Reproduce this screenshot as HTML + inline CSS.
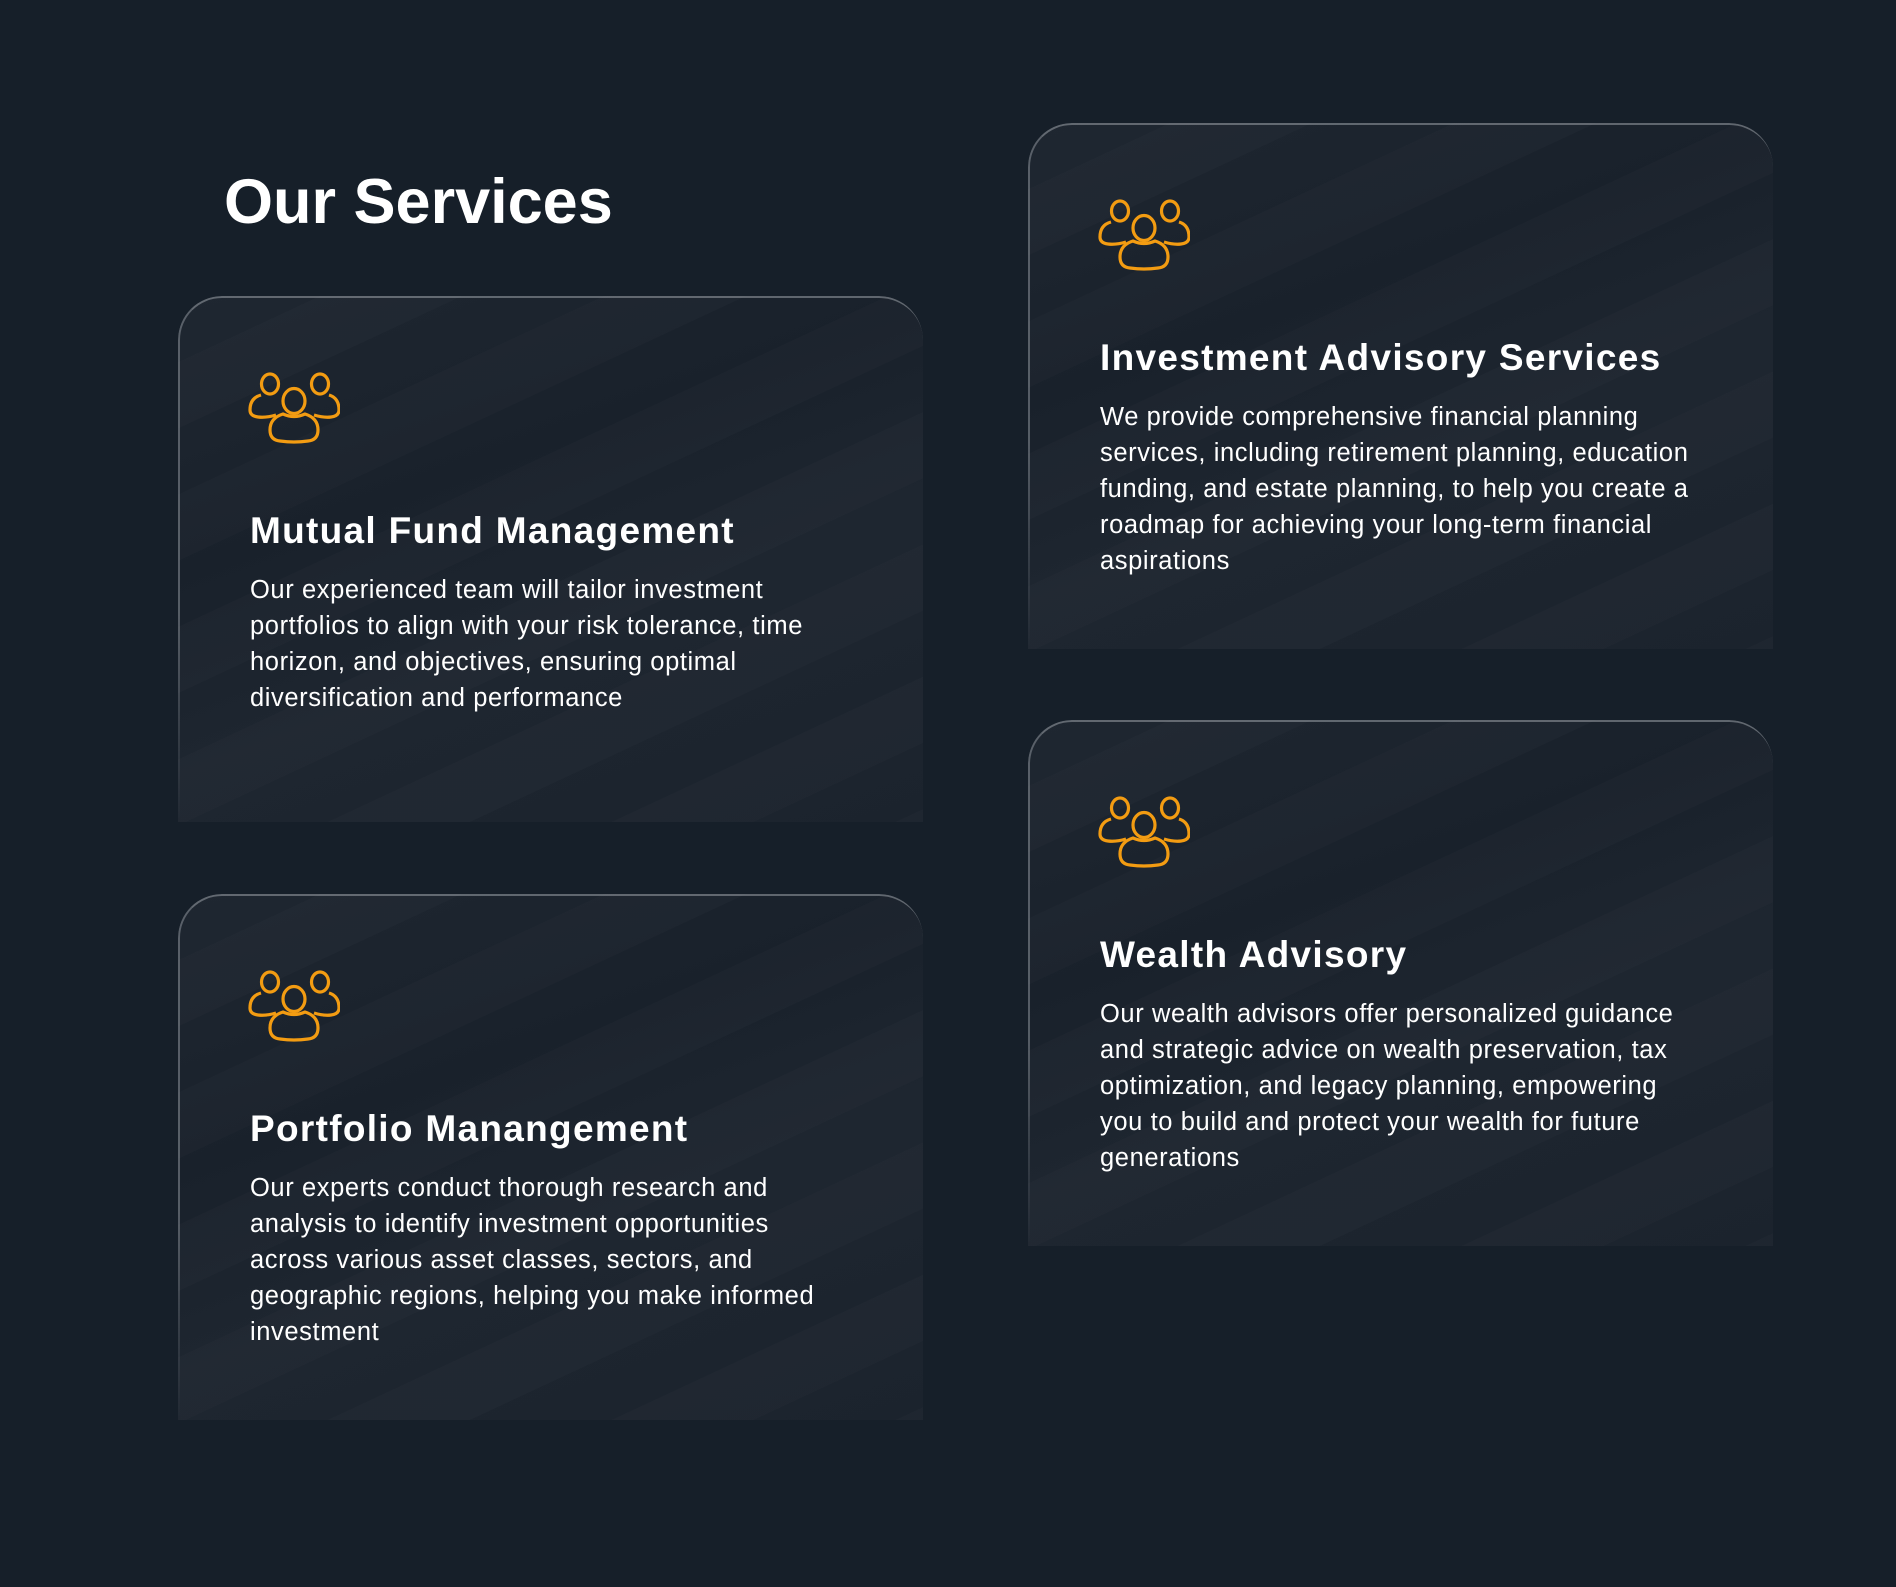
<!DOCTYPE html>
<html><head><meta charset="utf-8"><style>
html,body{margin:0;padding:0;}
body{width:1896px;height:1587px;background:#161f29;position:relative;overflow:hidden;font-family:"Liberation Sans",sans-serif;color:#fff;}
h1{position:absolute;left:224px;top:162px;margin:0;font-size:63px;font-weight:700;letter-spacing:0px;line-height:80px;}
.card{position:absolute;width:745px;height:526px;border-radius:44px 44px 0 0;
background:
repeating-linear-gradient(155deg,rgba(255,255,255,0.0) 0 60px,rgba(255,255,255,0.015) 60px 120px),
linear-gradient(160deg,#1f2731 0%,#19212b 35%,#1e2630 60%,#1b232d 100%);
box-sizing:border-box;}
.card:before{content:"";position:absolute;inset:0;border-radius:44px 44px 0 0;border-top:2px solid rgba(200,205,210,0.4);border-left:2px solid rgba(200,205,210,0.35);
-webkit-mask:linear-gradient(180deg,#000 0%,#000 60%,transparent 100%);}
.icon{position:absolute;left:70px;top:74px;width:92px;height:76px;}
.card h2{position:absolute;left:72px;top:213px;margin:0;font-size:37px;font-weight:700;line-height:44px;white-space:nowrap;letter-spacing:1.3px;}
.card p{position:absolute;left:72px;top:276px;margin:0;font-size:25.5px;line-height:36px;width:600px;letter-spacing:0.6px;}
</style></head><body>
<h1>Our Services</h1>

<div class="card" style="left:178px;top:296px">
<svg class="icon" viewBox="0 0 92 76" fill="none" stroke="#f39c12" stroke-width="3.2" stroke-linejoin="round">
<ellipse cx="22" cy="14" rx="8.5" ry="10"/><ellipse cx="72" cy="14" rx="8.5" ry="10"/>
<path d="M13 25 Q2 28 2 40 Q2 46 10 47 Q18 48 28 45"/>
<path d="M81 25 Q91 28 91 40 Q91 46 83 47 Q76 48 66 45"/>
<ellipse cx="46" cy="31" rx="11" ry="12.5"/>
<path d="M35 44 Q22 48 22 60 Q22 70 32 71 Q46 73 60 71 Q70 70 70 60 Q70 48 57 44 Q46 49 35 44Z"/>
</svg>
<h2>Mutual Fund Management</h2>
<p>Our experienced team will tailor investment portfolios to align with your risk tolerance, time horizon, and objectives, ensuring optimal diversification and performance</p>
</div>

<div class="card" style="left:178px;top:894px">
<svg class="icon" viewBox="0 0 92 76" fill="none" stroke="#f39c12" stroke-width="3.2" stroke-linejoin="round">
<ellipse cx="22" cy="14" rx="8.5" ry="10"/><ellipse cx="72" cy="14" rx="8.5" ry="10"/>
<path d="M13 25 Q2 28 2 40 Q2 46 10 47 Q18 48 28 45"/>
<path d="M81 25 Q91 28 91 40 Q91 46 83 47 Q76 48 66 45"/>
<ellipse cx="46" cy="31" rx="11" ry="12.5"/>
<path d="M35 44 Q22 48 22 60 Q22 70 32 71 Q46 73 60 71 Q70 70 70 60 Q70 48 57 44 Q46 49 35 44Z"/>
</svg>
<h2>Portfolio Manangement</h2>
<p>Our experts conduct thorough research and analysis to identify investment opportunities across various asset classes, sectors, and geographic regions, helping you make informed investment</p>
</div>

<div class="card" style="left:1028px;top:123px">
<svg class="icon" viewBox="0 0 92 76" fill="none" stroke="#f39c12" stroke-width="3.2" stroke-linejoin="round">
<ellipse cx="22" cy="14" rx="8.5" ry="10"/><ellipse cx="72" cy="14" rx="8.5" ry="10"/>
<path d="M13 25 Q2 28 2 40 Q2 46 10 47 Q18 48 28 45"/>
<path d="M81 25 Q91 28 91 40 Q91 46 83 47 Q76 48 66 45"/>
<ellipse cx="46" cy="31" rx="11" ry="12.5"/>
<path d="M35 44 Q22 48 22 60 Q22 70 32 71 Q46 73 60 71 Q70 70 70 60 Q70 48 57 44 Q46 49 35 44Z"/>
</svg>
<h2>Investment Advisory Services</h2>
<p>We provide comprehensive financial planning services, including retirement planning, education funding, and estate planning, to help you create a roadmap for achieving your long-term financial aspirations</p>
</div>

<div class="card" style="left:1028px;top:720px">
<svg class="icon" viewBox="0 0 92 76" fill="none" stroke="#f39c12" stroke-width="3.2" stroke-linejoin="round">
<ellipse cx="22" cy="14" rx="8.5" ry="10"/><ellipse cx="72" cy="14" rx="8.5" ry="10"/>
<path d="M13 25 Q2 28 2 40 Q2 46 10 47 Q18 48 28 45"/>
<path d="M81 25 Q91 28 91 40 Q91 46 83 47 Q76 48 66 45"/>
<ellipse cx="46" cy="31" rx="11" ry="12.5"/>
<path d="M35 44 Q22 48 22 60 Q22 70 32 71 Q46 73 60 71 Q70 70 70 60 Q70 48 57 44 Q46 49 35 44Z"/>
</svg>
<h2>Wealth Advisory</h2>
<p>Our wealth advisors offer personalized guidance and strategic advice on wealth preservation, tax optimization, and legacy planning, empowering you to build and protect your wealth for future generations</p>
</div>
</body></html>
